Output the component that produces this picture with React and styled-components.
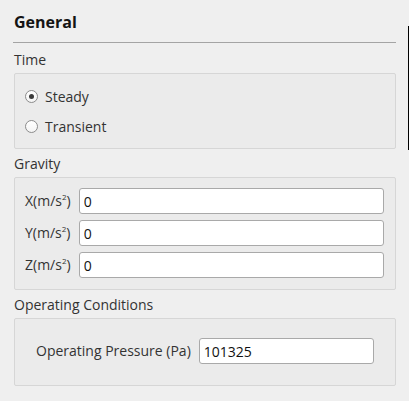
import React, { useState } from "react";
import styled, { createGlobalStyle } from "styled-components";

const GlobalStyle = createGlobalStyle`
  html, body {
    margin: 0;
    padding: 0;
    background: #efefef;
  }
  body {
    font-family: "Open Sans", "Noto Sans", sans-serif;
    font-size: 14px;
    color: #333333;
  }
`;

const Page = styled.div`
  position: relative;
  width: 409px;
  height: 401px;
  overflow: hidden;
  background: #efefef;
`;

const Panel = styled.div`
  display: flex;
  flex-direction: column;
  width: 382px;
  margin-left: 14px;
`;

const Title = styled.h2`
  margin: 0;
  padding-top: 12px;
  font-size: 16px;
  line-height: 20px;
  font-weight: 700;
  color: #141414;
`;

const Divider = styled.div`
  height: 1px;
  margin: 10px 0 0 -1px;
  background: #a4a4a4;
`;

const SectionLabel = styled.div`
  padding: ${(p) => (p.$first ? "8px" : "6px")} 0 4px;
  line-height: 18px;
`;

const GroupBox = styled.div`
  display: flex;
  flex-direction: column;
  background: #ebebeb;
  border: 1px solid #d6d6d6;
  border-radius: 2px;
  padding: ${(p) => p.$pad};
`;

const RadioRow = styled.label`
  display: flex;
  align-items: center;
  gap: 7px;
  height: 30px;
  cursor: pointer;
`;

const RadioDot = styled.span`
  position: relative;
  width: 11px;
  height: 11px;
  border-radius: 50%;
  border: 1px solid #8c8c8c;
  background: linear-gradient(#ffffff, #f4f4f4);

  &::after {
    content: "";
    display: ${(p) => (p.$checked ? "block" : "none")};
    position: absolute;
    left: 3px;
    top: 3px;
    width: 5px;
    height: 5px;
    border-radius: 50%;
    background: #3a3a3a;
  }
`;

const FieldGrid = styled.div`
  display: grid;
  grid-template-columns: auto 1fr;
  column-gap: 8px;
  row-gap: 6px;
  align-items: center;
`;

const FieldLabel = styled.span`
  line-height: 18px;
  white-space: nowrap;

  sup {
    font-size: 8px;
    line-height: 0;
  }
`;

const TextInput = styled.input`
  box-sizing: border-box;
  height: 26px;
  width: ${(p) => p.$width || "100%"};
  padding: 0 4px;
  border: 1px solid #a9a9a9;
  border-radius: 3px;
  background: #ffffff;
  font-family: inherit;
  font-size: 14px;
  color: #111111;
  outline: none;
`;

const PressureRow = styled.div`
  display: flex;
  align-items: center;
  gap: 8px;
`;

const EdgeLine = styled.div`
  position: absolute;
  left: 408px;
  top: 26px;
  width: 1px;
  height: 124px;
  background: #000000;
`;

const axes = ["X", "Y", "Z"];

export default function App() {
  const [time, setTime] = useState("steady");
  const [gravity, setGravity] = useState({ X: "0", Y: "0", Z: "0" });
  const [pressure, setPressure] = useState("101325");

  return (
    <Page>
      <GlobalStyle />
      <Panel>
        <Title>General</Title>
        <Divider />

        <SectionLabel $first>Time</SectionLabel>
        <GroupBox $pad="7px 10px">
          <RadioRow onClick={() => setTime("steady")}>
            <RadioDot $checked={time === "steady"} />
            Steady
          </RadioRow>
          <RadioRow onClick={() => setTime("transient")}>
            <RadioDot $checked={time === "transient"} />
            Transient
          </RadioRow>
        </GroupBox>

        <SectionLabel>Gravity</SectionLabel>
        <GroupBox $pad="10px 11px 11px 10px">
          <FieldGrid>
            {axes.map((a) => (
              <React.Fragment key={a}>
                <FieldLabel>
                  {a}(m/s<sup>2</sup>)
                </FieldLabel>
                <TextInput
                  value={gravity[a]}
                  onChange={(e) =>
                    setGravity({ ...gravity, [a]: e.target.value })
                  }
                />
              </React.Fragment>
            ))}
          </FieldGrid>
        </GroupBox>

        <SectionLabel>Operating Conditions</SectionLabel>
        <GroupBox $pad="19px 10px 21px 21px">
          <PressureRow>
            <FieldLabel>Operating Pressure (Pa)</FieldLabel>
            <TextInput
              $width="175px"
              value={pressure}
              onChange={(e) => setPressure(e.target.value)}
            />
          </PressureRow>
        </GroupBox>
      </Panel>
      <EdgeLine />
    </Page>
  );
}
